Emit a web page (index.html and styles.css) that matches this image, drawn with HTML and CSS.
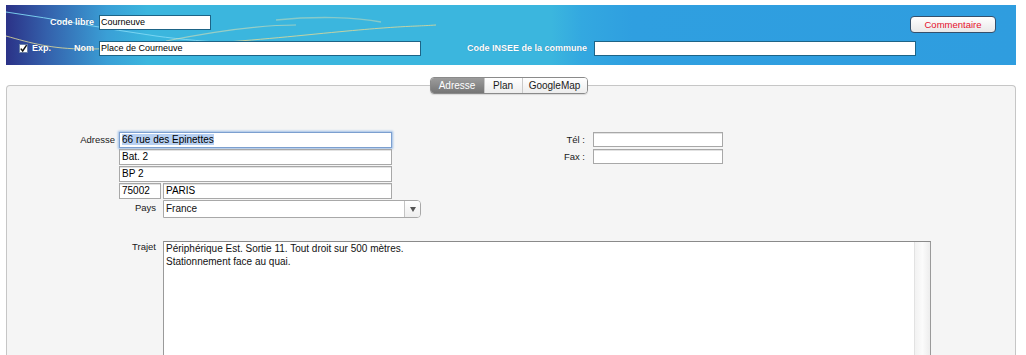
FILE: index.html
```html
<!DOCTYPE html>
<html lang="fr">
<head>
    <meta charset="UTF-8">
    <title>Lieu - Place de Courneuve</title>
    <link rel="stylesheet" href="styles.css">
</head>
<body>
<div class="page">

    <!-- Bandeau bleu avec les champs principaux -->
    <header class="banner">
        <svg class="waves" viewBox="0 0 1010 60" preserveAspectRatio="none">
            <path d="M0 7 C 50 14, 100 24, 150 31 S 260 40, 330 42" fill="none" stroke="#7fd8f4" stroke-width="1" opacity="0.9"/>
            <path d="M0 31 C 25 38, 45 44, 80 44 S 200 40, 300 30 S 400 22, 430 20" fill="none" stroke="#d9d79a" stroke-width="1" opacity="0.85"/>
            <path d="M160 36 C 210 26, 250 20, 290 20" fill="none" stroke="#e6e2b0" stroke-width="1.2" opacity="0.55"/>
            <path d="M270 15 C 310 11, 350 12, 375 17" fill="none" stroke="#e6e2b0" stroke-width="1.5" opacity="0.45"/>
        </svg>

        <div class="banner-row first">
            <span class="banner-label">Code libre</span>
            <div class="banner-field short">Courneuve</div>
            <button class="comment-btn">Commentaire</button>
        </div>

        <div class="banner-row">
            <div class="banner-label lead">
                <span class="exp">
                    <svg class="check" viewBox="0 0 9 9" width="9" height="9">
                        <rect x="0.5" y="0.5" width="8" height="8" fill="#fff" stroke="#6a7fa8"/>
                        <path d="M1.8 4.6 L3.7 7 L7.6 1.2" fill="none" stroke="#111" stroke-width="1.5"/>
                    </svg>Exp.
                </span>
                <span>Nom</span>
            </div>
            <div class="banner-field long">Place de Courneuve</div>
            <span class="banner-label insee">Code INSEE de la commune</span>
            <div class="banner-field long"></div>
        </div>
    </header>

    <!-- Panneau avec onglets -->
    <section class="panel">
        <nav class="tabs">
            <div class="tab-group">
                <span class="tab active t-adresse">Adresse</span>
                <span class="tab t-plan">Plan</span>
                <span class="tab t-map">GoogleMap</span>
            </div>
        </nav>

        <div class="top-row">
            <div class="left">
                <div class="addr-row">
                    <span class="field-label">Adresse</span>
                    <div class="stack">
                        <div class="field focused"><span class="selected">66 rue des Epinettes</span></div>
                        <div class="field">Bat. 2</div>
                        <div class="field">BP 2</div>
                        <div class="split">
                            <div class="field zip">75002</div>
                            <div class="field city">PARIS</div>
                        </div>
                    </div>
                </div>
                <div class="pays-row">
                    <span class="field-label wide">Pays</span>
                    <div class="select">
                        <span class="select-value">France</span>
                        <span class="select-arrow"><i></i></span>
                    </div>
                </div>
            </div>

            <div class="right">
                <div class="phone-row">
                    <span class="phone-label">Tél :</span>
                    <div class="field phone"></div>
                </div>
                <div class="phone-row">
                    <span class="phone-label">Fax :</span>
                    <div class="field phone"></div>
                </div>
            </div>
        </div>

        <div class="trajet-row">
            <span class="field-label wide top">Trajet</span>
            <div class="memo">
                <div class="memo-text">Périphérique Est. Sortie 11. Tout droit sur 500 mètres.<br>Stationnement face au quai.</div>
                <div class="memo-scroll"></div>
            </div>
        </div>
    </section>

</div>
</body>
</html>
```

FILE: styles.css
```css
body {
    margin: 0;
    background-color: #FFFFFF;
    font-family: "Liberation Sans", Arial, sans-serif;
    color: #111;
}
.page {
    padding: 5px 10px 0 6px;
}

/* Bandeau */
.banner {
    position: relative;
    height: 60px;
    box-sizing: border-box;
    padding-top: 10px;
    overflow: hidden;
    background: linear-gradient(to right, #2b3287 0%, #3460ab 4%, #3a9fd6 10%, #3bb6de 14%, #3bb6de 54%, #33a8e0 57%, #2f9fe0 62%, #2f9ddf 100%);
}
.waves {
    position: absolute;
    left: 0;
    top: 0;
    width: 100%;
    height: 100%;
}
.banner-row {
    position: relative;
    display: flex;
    align-items: flex-start;
}
.banner-row.first {
    height: 18px;
    margin-bottom: 8px;
}
.banner-label {
    width: 88px;
    margin-right: 5px;
    text-align: right;
    color: #fff;
    font-size: 9px;
    font-weight: bold;
    line-height: 15px;
    text-shadow: 0 0 1px rgba(0, 40, 90, 0.4);
}
.banner-label.lead {
    display: flex;
    justify-content: space-between;
    align-items: center;
    box-sizing: border-box;
    padding-left: 13px;
}
.exp {
    display: flex;
    align-items: center;
    gap: 4px;
}
.check {
    display: block;
}
.banner-label.insee {
    width: 166px;
    margin-right: 7px;
}
.banner-field {
    height: 15px;
    box-sizing: border-box;
    background: #fff;
    border: 1px solid #1d6487;
    font-size: 9px;
    line-height: 13px;
    padding: 0 1px;
    color: #000;
}
.banner-field.short { width: 112px; }
.banner-field.long { width: 322px; }
.comment-btn {
    margin-left: auto;
    margin-right: 20px;
    margin-top: 1px;
    width: 86px;
    height: 17px;
    padding: 0;
    border: 1px solid #35506c;
    border-radius: 4px;
    background: linear-gradient(#ffffff, #e8e8e8);
    color: #e5102c;
    font-family: "Liberation Sans", Arial, sans-serif;
    font-size: 9.5px;
}

/* Panneau */
.panel {
    margin-top: 20px;
    height: 269px;
    border: 1px solid #c6c6c6;
    border-bottom: none;
    border-radius: 4px 4px 0 0;
    background: #f5f5f5;
}
.tabs {
    display: flex;
    justify-content: center;
    margin-top: -9px;
    padding-right: 5px;
}
.tab-group {
    display: flex;
    height: 17px;
    box-sizing: border-box;
    border: 1px solid #8a8a8a;
    border-radius: 4px;
    overflow: hidden;
    box-shadow: 0 1px 1px rgba(0, 0, 0, 0.12);
}
.tab {
    font-size: 10px;
    line-height: 15px;
    text-align: center;
    color: #1a1a1a;
    background: linear-gradient(#ffffff, #ededed);
}
.tab + .tab { border-left: 1px solid #c9c9c9; }
.tab.active {
    color: #fff;
    background: linear-gradient(#9c9c9c, #757575);
}
.t-adresse { width: 53px; }
.t-plan { width: 37px; }
.t-map { width: 64px; }

.top-row {
    display: flex;
    margin-top: 38px;
}
.left { width: 414px; }
.addr-row { display: flex; }
.field-label {
    width: 108px;
    margin-right: 4px;
    text-align: right;
    font-size: 9.5px;
    line-height: 16px;
    color: #1a1a1a;
}
.field-label.wide {
    width: 149px;
    margin-right: 7px;
}
.field-label.top { line-height: 12px; }
.stack {
    display: flex;
    flex-direction: column;
    gap: 1px;
    width: 273px;
}
.field {
    height: 16px;
    box-sizing: border-box;
    border: 1px solid #a8a8a8;
    box-shadow: inset 0 1px 0 #e2e2e2;
    background: #fff;
    font-size: 10px;
    line-height: 14px;
    padding: 0 2px;
    color: #000;
}
.field.focused {
    border-color: #7c9fcf;
    box-shadow: 0 0 2px 1px #9dbde6;
}
.selected { background: #b7d0f2; }
.split {
    display: flex;
    gap: 2px;
}
.zip { width: 42px; }
.city { flex: 1; }

.pays-row {
    display: flex;
    margin-top: 1px;
}
.select {
    display: flex;
    width: 258px;
    height: 18px;
    box-sizing: border-box;
    border: 1px solid #a8a8a8;
    border-radius: 0 4px 4px 0;
    background: #fff;
}
.select-value {
    flex: 1;
    font-size: 10px;
    line-height: 16px;
    padding: 0 2px;
}
.select-arrow {
    width: 15px;
    display: flex;
    align-items: center;
    justify-content: center;
    border-left: 1px solid #c4c4c4;
    border-radius: 0 3px 3px 0;
    background: linear-gradient(#ffffff, #eeeeee);
}
.select-arrow i {
    width: 0;
    height: 0;
    border-left: 3px solid transparent;
    border-right: 3px solid transparent;
    border-top: 5px solid #555;
}

.right { margin-left: 104px; }
.phone-row {
    display: flex;
    margin-bottom: 2px;
}
.phone-label {
    width: 60px;
    margin-right: 8px;
    text-align: right;
    font-size: 9.5px;
    line-height: 15px;
    color: #1a1a1a;
}
.field.phone {
    width: 130px;
    height: 15px;
}

/* Trajet */
.trajet-row {
    display: flex;
    margin-top: 23px;
}
.memo {
    display: flex;
    width: 768px;
    height: 114px;
    box-sizing: border-box;
    border: 1px solid #9a9a9a;
    border-top-color: #8a8a8a;
    border-bottom: none;
    background: #fff;
}
.memo-text {
    flex: 1;
    padding: 0 2px;
    font-size: 10px;
    line-height: 13px;
}
.memo-scroll {
    width: 15px;
    border-left: 1px solid #e2e2e2;
    background: linear-gradient(to right, #f2f2f2, #fbfbfb 50%, #ededed);
}
```
